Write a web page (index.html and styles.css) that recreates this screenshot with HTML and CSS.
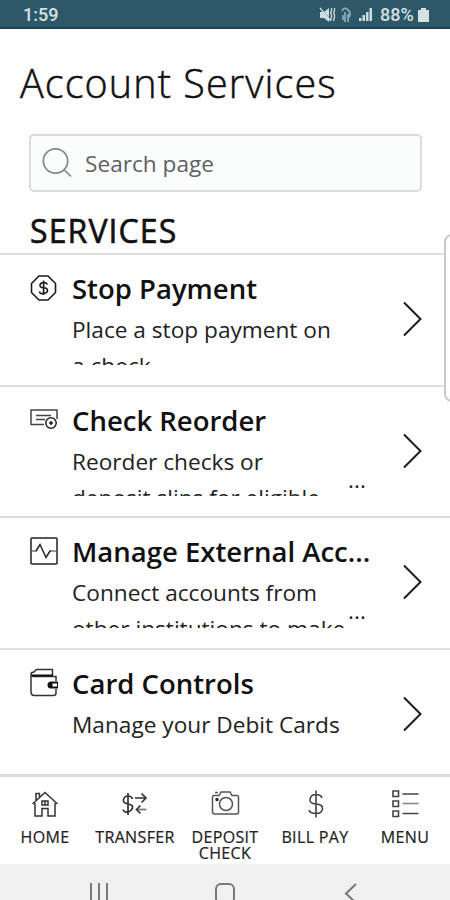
FILE: index.html
```html
<!DOCTYPE html>
<html lang="en">
<head>
<meta charset="utf-8">
<title>Account Services</title>
<link rel="stylesheet" href="styles.css">
</head>
<body>
<header class="status">
  <span class="time">1:59</span>
  <svg class="status-icons" width="58" height="18" viewBox="0 0 58 18">
    <g fill="#cfdde2">
      <path d="M1 6h4l5-4v14l-5-4H1z"/>
      <path d="M39 15h2.500v-3H39zM42.500 15H45v-6h-2.500zM46 15h2.500V6H46zM49.500 15H52V2h-2.500z" transform="translate(1 0)"/>
    </g>
    <path d="M1 2l12 13" stroke="#2d5868" stroke-width="1"/>
    <path d="M1 2l10 12M12.500 2v3l-1 2 1 2v2l-1 4M15.500 2v3l-1 2 1 2v2l-1 4" fill="none" stroke="#cfdde2" stroke-width="1.300"/>
    <path d="M23 5q2-4 5-2t3 5-2 3M26 6v10M29 8v8M24 9v5" fill="none" stroke="#8ba9b4" stroke-width="1.800"/>
  </svg>
  <span class="percent">88%</span>
  <svg class="battery" width="11" height="14" viewBox="0 0 11 14"><path d="M3 0h5v2h3v12H0V2h3z" fill="#d5e0e4"/></svg>
</header>

<main class="page">
  <h1 class="title">Account Services</h1>
  <div class="search">
    <svg width="32" height="32" viewBox="0 0 32 32" fill="none" stroke="#858686" stroke-width="1.700"><circle cx="14.500" cy="14" r="12.200"/><path d="M23 22.500l7 7"/></svg>
    <span class="placeholder">Search page</span>
  </div>
  <h2 class="section">SERVICES</h2>

  <div class="list">
    <article class="row">
      <svg class="icon" width="30" height="30" viewBox="0 0 30 30" fill="none" stroke="#1b1b1b" stroke-width="1.600"><path d="M10 3h9l7.500 7.500v9L19 27h-9L2.500 19.500v-9z"/><path d="M18.500 11.500q-1-2-4-2t-3.500 2.500 3.500 2.800 4 2.700-4 3-4-2M14.600 7.500v14.500"/></svg>
      <div class="text"><h3 class="name">Stop Payment</h3><p class="desc">Place a stop payment on<br>a check.</p></div>
      <svg class="chevron" width="20" height="36" viewBox="0 0 20 36"><path d="M2 1.500L18.500 18 2 34.500"/></svg>
    </article>
    <article class="row">
      <svg class="icon" width="30" height="30" viewBox="0 0 30 30" fill="none" stroke="#444" stroke-width="1.500"><path d="M15 19.500H2V5h26v9M7 10.500h15M7 14.500h9"/><circle cx="22" cy="18" r="5.200" stroke="#222"/><path d="M20 18h4M22 16v4" stroke="#222"/></svg>
      <div class="text"><h3 class="name">Check Reorder</h3><p class="desc more">Reorder checks or<br>deposit slips for eligible</p></div>
      <svg class="chevron" width="20" height="36" viewBox="0 0 20 36"><path d="M2 1.500L18.500 18 2 34.500"/></svg>
    </article>
    <article class="row">
      <svg class="icon" width="30" height="30" viewBox="0 0 30 30" fill="none" stroke="#222" stroke-width="1.500"><rect x="2" y="2" width="26" height="26" rx="1"/><path d="M3 15h5" stroke="#777"/><path d="M22 15h5" stroke="#777"/><path d="M7 15l4-6.500 6 13 4-6.500h1"/></svg>
      <div class="text"><h3 class="name">Manage External Acc...</h3><p class="desc more">Connect accounts from<br>other institutions to make</p></div>
      <svg class="chevron" width="20" height="36" viewBox="0 0 20 36"><path d="M2 1.500L18.500 18 2 34.500"/></svg>
    </article>
    <article class="row">
      <svg class="icon" width="30" height="30" viewBox="0 0 30 30" fill="none" stroke="#333" stroke-width="1.500"><path d="M27 13V8.500H4.500q-2.500 0-2.500-2V24q0 3.500 3.500 3.500h19q2.500 0 2.500-2.500v-4M2 6.500Q2 4 5 4l2.500-2.500h16V7"/><path d="M3 7.500h21" stroke="#111" stroke-width="2"/><path d="M29 13.500h-7q-3.500 0-3.500 3.500t3.500 3.500h7z" fill="#111" stroke="none"/><path d="M23.500 15.500H28v3h-4.500z" fill="#fff" stroke="none"/></svg>
      <div class="text"><h3 class="name">Card Controls</h3><p class="desc">Manage your Debit Cards</p></div>
      <svg class="chevron" width="20" height="36" viewBox="0 0 20 36"><path d="M2 1.500L18.500 18 2 34.500"/></svg>
    </article>
  </div>
  <div class="drawer"></div>
</main>

<nav class="tabs">
  <a class="tab"><svg width="30" height="30" viewBox="0 0 30 30" fill="none" stroke="#333" stroke-width="1.500"><path d="M2.500 15L15 3.500 27.500 15M6 11V4.500h3.500v4M5 14v13h7v-7.500h6V27h7V14M12 12h6v4h-6zM15 12v4"/></svg><span>HOME</span></a>
  <a class="tab"><svg width="30" height="30" viewBox="0 0 30 30" fill="none" stroke="#333" stroke-width="1.700"><path d="M12.500 10q-1-3-4.500-3t-4.500 3.500T8 15t4.500 4T8 23t-5-2.500M8 4v22"/><path d="M15 9h11M21.500 4.500L26 9l-4.500 4.500"/><path d="M26.500 20.500H17" stroke="#777"/><path d="M20.500 16.500l-4 4 4 4"/></svg><span>TRANSFER</span></a>
  <a class="tab"><svg width="30" height="30" viewBox="0 0 30 30" fill="none" stroke="#555" stroke-width="1.500"><path d="M4 6.500h5l2-3.500h9l2 3.500h5q1.500 0 1.500 1.500v15q0 2-2 2h-22q-2 0-2-2V8q0-1.500 1.500-1.500M5 3.500h3"/><circle cx="16" cy="15" r="6.500"/><circle cx="7" cy="10.500" r="1" stroke="#222"/></svg><span>DEPOSIT CHECK</span></a>
  <a class="tab"><svg width="30" height="30" viewBox="0 0 30 30" fill="none" stroke="#444" stroke-width="1.600"><path d="M22 9Q21 5.500 16 5.500T10 10t6 5 6.500 5-6.500 4.500T9 21M16 1.500v27"/></svg><span>BILL PAY</span></a>
  <a class="tab"><svg width="30" height="30" viewBox="0 0 30 30" fill="none" stroke="#444" stroke-width="1.600"><path d="M3 2h5.500v5.500H3zM3 12h5.500v5.500H3zM3 22h5.500v5.500H3zM12.500 5h16M12.500 24.500h16"/><path d="M12.500 14.500h16" stroke="#888"/></svg><span>MENU</span></a>
</nav>
<footer class="system">
  <svg width="20" height="26" viewBox="0 0 20 26"><path d="M2 0v26M10 0v26M18 0v26"/></svg>
  <svg width="22" height="26" viewBox="0 0 22 26"><rect x="2" y="1" width="18" height="19" rx="5"/></svg>
  <svg width="14" height="26" viewBox="0 0 14 26"><path d="M12 1L2 10.500 12 20"/></svg>
</footer>
</body>
</html>
```
FILE: styles.css
```css
* { box-sizing: border-box; }
body { margin: 0; width: 450px; height: 900px; overflow: hidden; background: #fefefe; color: #111; font-family: "Open Sans", "Noto Sans", sans-serif; display: flex; flex-direction: column; }
h1, h2, h3, p { margin: 0; white-space: nowrap; }
svg { display: block; flex: none; }
.status { height: 29px; flex: none; background: #2d5868; border-bottom: 2px solid #173f55; color: #d5e0e4; display: flex; align-items: center; padding: 2px 21px 0 23px; font: 500 18px/24px Roboto, sans-serif; }
.time { flex: 1; }
.status-icons { margin-right: 3px; }
.percent { width: 35px; white-space: nowrap; margin-right: 3px; }
.page { position: relative; height: 745px; flex: none; overflow: hidden; }
.title { font-size: 39.500px; font-weight: 300; letter-spacing: 1.100px; -webkit-text-stroke: 0.500px #111; line-height: 54px; padding: 27px 0 0 20px; }
.search { margin: 24px 28px 0 29px; height: 58px; border: 2px solid #d9dbda; border-radius: 5px; background: #fbfdfc; display: flex; align-items: center; gap: 12px; padding-left: 10px; }
.placeholder { font-size: 22.650px; color: #606060; }
.section { font-size: 32px; font-weight: 400; letter-spacing: 1.100px; -webkit-text-stroke: 0.600px #111; line-height: 40px; padding: 19px 0 0 30px; height: 61px; }
.row { height: 131.500px; border-top: 2px solid #dedede; display: flex; padding: 0 28px 0 29px; }
.icon { margin-top: 18px; margin-right: 13px; }
.text { width: 300px; padding-top: 14px; }
.name { font-size: 27.500px; font-weight: 600; line-height: 40px; }
.desc { position: relative; font-size: 22.650px; line-height: 36px; height: 54.500px; overflow: hidden; color: #222; padding-top: 2px; margin-top: 1px; }
.more::after { content: "..."; position: absolute; left: 276px; top: 20px; line-height: 36px; }
.chevron { margin: 46px 0 0 auto; fill: none; stroke: #1b1b1b; stroke-width: 2; }
.drawer { position: absolute; left: 444px; top: 205px; width: 20px; height: 168px; border: 2px solid #c9c9c9; border-radius: 8px; background: #fefefe; }
.tabs { height: 90px; flex: none; border-top: 3px solid #dcdcdc; display: grid; grid-template-columns: repeat(5, 90px); }
.tab { display: flex; flex-direction: column; align-items: center; padding-top: 12px; }
.tab span { margin-top: 10px; font-size: 16px; letter-spacing: 0.350px; line-height: 16px; text-align: center; color: #222; -webkit-text-stroke: 0.200px #222; }
.system { flex: 1; background: #f0f0f0; display: grid; grid-template-columns: 36px repeat(3, 126px); padding-top: 19px; overflow: hidden; }
.system svg { justify-self: center; fill: none; stroke: #777; stroke-width: 2; }
.system svg:first-child { grid-column: 2; }
```
